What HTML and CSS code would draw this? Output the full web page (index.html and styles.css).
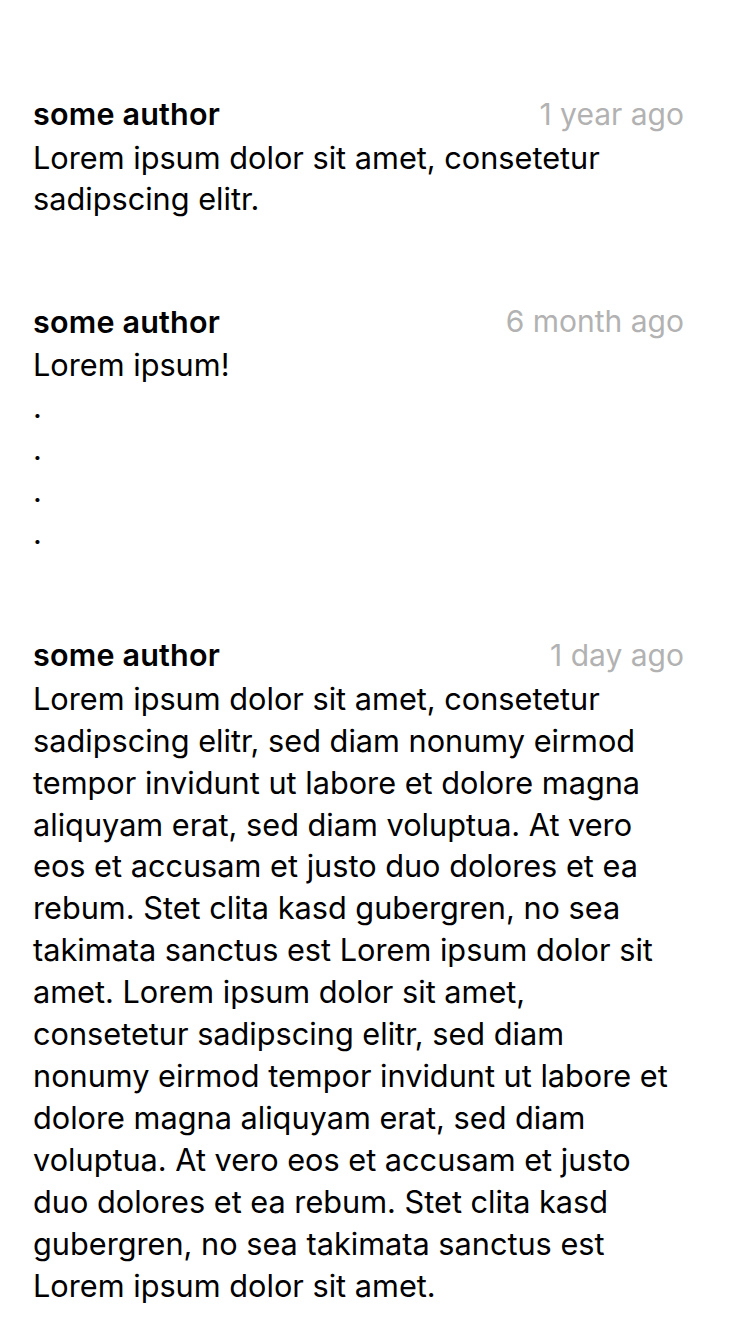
FILE: index.html
```html
<!DOCTYPE html>
<html>
<head>
<meta charset="utf-8">
<link rel="stylesheet" href="styles.css">
</head>
<body>
<div class="list">
  <div class="comment">
    <div class="head"><span class="author">some author</span><span class="time">1 year ago</span></div>
    <div class="body">Lorem ipsum dolor sit amet, consetetur sadipscing elitr.</div>
  </div>
  <div class="comment">
    <div class="head"><span class="author">some author</span><span class="time">6 month ago</span></div>
    <div class="body">Lorem ipsum!<br>.<br>.<br>.<br>.</div>
  </div>
  <div class="comment">
    <div class="head"><span class="author">some author</span><span class="time">1 day ago</span></div>
    <div class="body">Lorem ipsum dolor sit amet, consetetur sadipscing elitr, sed diam nonumy eirmod tempor invidunt ut labore et dolore magna aliquyam erat, sed diam voluptua. At vero eos et accusam et justo duo dolores et ea rebum. Stet clita kasd gubergren, no sea takimata sanctus est Lorem ipsum dolor sit amet. Lorem ipsum dolor sit amet, consetetur sadipscing elitr, sed diam nonumy eirmod tempor invidunt ut labore et dolore magna aliquyam erat, sed diam voluptua. At vero eos et accusam et justo duo dolores et ea rebum. Stet clita kasd gubergren, no sea takimata sanctus est Lorem ipsum dolor sit amet.</div>
  </div>
</div>
</body>
</html>
```
FILE: styles.css
```css
html, body {
  margin: 0;
  padding: 0;
  background: #ffffff;
}
body {
  font-family: Inter, "Liberation Sans", sans-serif;
  color: #000000;
  -webkit-font-smoothing: antialiased;
}
.list {
  display: flex;
  flex-direction: column;
  gap: 78px;
  padding: 90.5px 66px 0 33px;
}
.comment {
  display: flex;
  flex-direction: column;
}
.head {
  display: flex;
  justify-content: space-between;
  align-items: center;
  height: 46px;
}
.author {
  font-size: 30.5px;
  font-weight: 600;
  letter-spacing: 0.2px;
}
.time {
  font-size: 30px;
  color: #b2b2b2;
}
.body {
  font-size: 30.7px;
  line-height: 41.9px;
}
```
